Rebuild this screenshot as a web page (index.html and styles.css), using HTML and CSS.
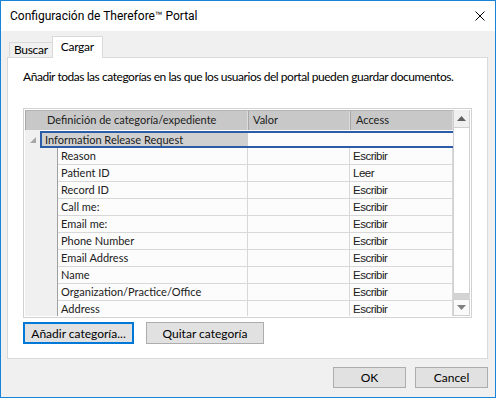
FILE: index.html
```html
<!DOCTYPE html>
<html>
<head>
<meta charset="utf-8">
<link rel="stylesheet" href="styles.css">
</head>
<body>
<div class="window">
  <div class="titlebar">
    <span class="title">Configuración de Therefore™ Portal</span>
    <svg class="close" width="10" height="10" viewBox="0 0 10 10"><path d="M0.5 0.5 L9.5 9.5 M9.5 0.5 L0.5 9.5" stroke="#000" stroke-width="1" fill="none"/></svg>
  </div>
  <div class="body">
    <div class="tabs">
      <div class="tab">Buscar</div>
      <div class="tab active">Cargar</div>
    </div>
    <div class="panel">
      <p class="desc">Añadir todas las categorías en las que los usuarios del portal pueden guardar documentos.</p>
      <div class="grid">
        <div class="grid-main">
          <div class="hdr">
            <div class="hcell hname">Definición de categoría/expediente</div>
            <div class="hcell hval">Valor</div>
            <div class="hcell hacc">Access</div>
          </div>
          <div class="group">
            <div class="gexp"><svg width="6" height="6" viewBox="0 0 6 6"><path d="M6 0 L6 6 L0 6 Z" fill="#a6a6a6"/></svg></div>
            <div class="gsel">
              <div class="gname">Information Release Request</div>
              <div class="grest"></div>
            </div>
          </div>
          <div class="row"><div class="rh"></div><div class="ind"></div><div class="c cname">Reason</div><div class="c cval"></div><div class="c cacc">Escribir</div></div>
          <div class="row"><div class="rh"></div><div class="ind"></div><div class="c cname">Patient ID</div><div class="c cval"></div><div class="c cacc">Leer</div></div>
          <div class="row"><div class="rh"></div><div class="ind"></div><div class="c cname">Record ID</div><div class="c cval"></div><div class="c cacc">Escribir</div></div>
          <div class="row"><div class="rh"></div><div class="ind"></div><div class="c cname">Call me:</div><div class="c cval"></div><div class="c cacc">Escribir</div></div>
          <div class="row"><div class="rh"></div><div class="ind"></div><div class="c cname">Email me:</div><div class="c cval"></div><div class="c cacc">Escribir</div></div>
          <div class="row"><div class="rh"></div><div class="ind"></div><div class="c cname">Phone Number</div><div class="c cval"></div><div class="c cacc">Escribir</div></div>
          <div class="row"><div class="rh"></div><div class="ind"></div><div class="c cname">Email Address</div><div class="c cval"></div><div class="c cacc">Escribir</div></div>
          <div class="row"><div class="rh"></div><div class="ind"></div><div class="c cname">Name</div><div class="c cval"></div><div class="c cacc">Escribir</div></div>
          <div class="row"><div class="rh"></div><div class="ind"></div><div class="c cname">Organization/Practice/Office</div><div class="c cval"></div><div class="c cacc">Escribir</div></div>
          <div class="row last"><div class="rh"></div><div class="ind"></div><div class="c cname">Address</div><div class="c cval"></div><div class="c cacc">Escribir</div></div>
        </div>
        <div class="scrollbar">
          <div class="sbtn"><svg width="9" height="5" viewBox="0 0 9 5"><path d="M4.5 0 L9 5 L0 5 Z" fill="#606060"/></svg></div>
          <div class="thumb"></div>
          <div class="track"></div>
          <div class="sbtn down"><svg width="9" height="5" viewBox="0 0 9 5"><path d="M0 0 L9 0 L4.5 5 Z" fill="#808080"/></svg></div>
        </div>
      </div>
      <div class="pbuttons">
        <div class="btn focused">Añadir categoría...</div>
        <div class="btn quitar">Quitar categoría</div>
      </div>
    </div>
    <div class="footer">
      <div class="btn fbtn">OK</div>
      <div class="btn fbtn">Cancel</div>
    </div>
  </div>
</div>
</body>
</html>
```
FILE: styles.css
```css
* { box-sizing: border-box; }
html, body { margin: 0; padding: 0; background: #f0f0f0; }
body { font-family: Lato, Roboto, sans-serif; font-size: 12px; color: #000; }

.window {
  width: 496px;
  height: 398px;
  border: 1px solid #1883d7;
  display: flex;
  flex-direction: column;
  background: #f0f0f0;
}
.titlebar {
  height: 30px;
  background: #fff;
  display: flex;
  align-items: center;
  justify-content: space-between;
  padding: 0 10px 0 9px;
}
.title { font-family: Roboto, sans-serif; font-size: 12px; color: #000; }
.close { display: block; }

.body {
  flex: 1;
  display: flex;
  flex-direction: column;
  padding: 7px 7px 0 6px;
}
.tabs {
  display: flex;
  align-items: flex-end;
  height: 20px;
  padding-left: 2px;
  position: relative;
  z-index: 1;
  margin-bottom: -1px;
}
.tab {
  height: 15px;
  border: 1px solid #d9d9d9;
  border-bottom: none;
  background: #f0f0f0;
  padding: 0 4px 0 4px;
  line-height: 13px;
  font-size: 12px;
  letter-spacing: -0.3px;
  margin-bottom: 1px;
}
.tab.active {
  height: 22px;
  margin-bottom: 0;
  margin-left: -1px;
  background: #fff;
  padding: 0 8px 0 8px;
  line-height: 19px;
}
.panel {
  height: 302px;
  background: #fff;
  border: 1px solid #d9d9d9;
  padding: 11px 0 0 15px;
}
.desc {
  margin: 0;
  line-height: 16px;
  white-space: nowrap;
  letter-spacing: -0.45px;
}

.grid {
  margin-top: 23px;
  width: 449px;
  height: 210px;
  border: 1px solid #d2d2d2;
  padding: 1px;
  display: flex;
  background: #fff;
}
.grid-main {
  width: 428px;
  overflow: hidden;
  background: #fcfcfc;
  font-size: 11px;
}
.hdr {
  height: 20px;
  display: flex;
  background: #c8c8c8;
  border-top: 1px solid #b4b4b4;
}
.hcell {
  line-height: 18px;
  color: #202020;
  border-left: 1px solid #a7a7a7;
  border-right: 1px solid #dcdcdc;
}
.hname { width: 223px; padding-left: 21px; border-left: 1px solid #a7a7a7; }
.hval { width: 102px; padding-left: 4px; }
.hacc { width: 103px; padding-left: 5px; }

.group {
  height: 18px;
  display: flex;
}
.gexp {
  width: 15px;
  background: #f0f0f0;
  display: flex;
  align-items: center;
  justify-content: center;
  padding-top: 2px;
}
.gsel {
  flex: 1;
  display: flex;
  border: 2px solid #2a5ca8;
  border-right: none;
  margin-top: 1px;
  height: 17px;
}
.gname {
  width: 206px;
  background: #d0d0d0;
  line-height: 13px;
  padding-left: 3px;
  color: #202020;
}
.grest { flex: 1; background: #fcfcfc; }

.row {
  height: 17px;
  display: flex;
}
.rh { width: 15px; background: #f0f0f0; }
.ind { width: 18px; background: #f0f0f0; border-right: 1px solid #a0a0a0; }
.c {
  height: 17px;
  border-right: 1px solid #d8d8d8;
  border-bottom: 1px solid #d8d8d8;
  background: #fcfcfc;
  line-height: 16px;
  color: #202020;
  white-space: nowrap;
}
.cname { width: 190px; padding-left: 3px; }
.cval { width: 102px; }
.cacc {
  width: 103px;
  padding-left: 3px;
  font-family: "Liberation Sans", Arial, sans-serif;
  font-size: 11.5px;
  letter-spacing: -0.5px;
}
.row.last .c { border-bottom: none; }

.scrollbar {
  width: 17px;
  display: flex;
  flex-direction: column;
  background: #f0f0f0;
}
.sbtn {
  height: 17px;
  display: flex;
  align-items: center;
  justify-content: center;
  background: #f0f0f0;
  border-left: 1px solid #d0d0d0;
  border-right: 1px solid #d0d0d0;
}
.sbtn.down {
  background: #fafafa;
  border: 1px solid #d0d0d0;
}
.thumb {
  flex: 1;
  background: #fff;
  border: 1px solid #d0d0d0;
}
.track {
  height: 5px;
  background: #d4d4d4;
}

.pbuttons {
  margin-top: 4px;
  display: flex;
  gap: 12px;
}
.btn {
  height: 22px;
  background: #e1e1e1;
  border: 1px solid #adadad;
  display: flex;
  align-items: center;
  justify-content: center;
  color: #000;
}
.btn.focused {
  width: 111px;
  border: 2px solid #0078d7;
}
.btn.quitar { width: 118px; }

.footer {
  display: flex;
  justify-content: flex-end;
  gap: 9px;
  padding-top: 8px;
}
.fbtn { width: 73px; height: 21px; }
```
